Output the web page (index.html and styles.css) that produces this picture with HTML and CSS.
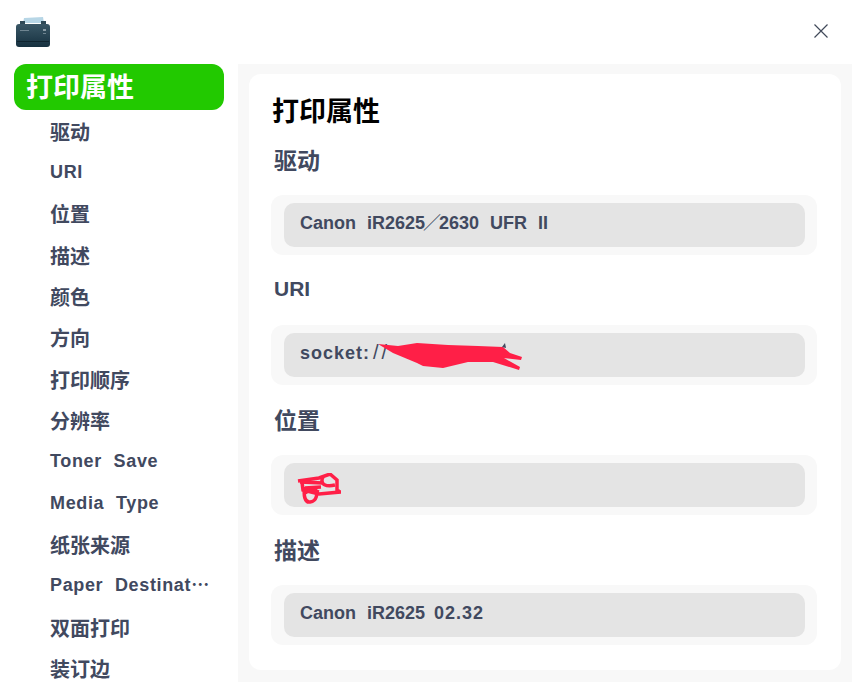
FILE: index.html
```html
<!DOCTYPE html>
<html lang="zh-CN">
<head>
<meta charset="utf-8">
<title>打印属性</title>
<link rel="stylesheet" href="styles.css">
</head>
<body>
<div class="app">
  <header class="titlebar">
    <svg class="logo" viewBox="0 0 36 31" width="36" height="31">
      <defs>
        <linearGradient id="bodyGrad" x1="0" y1="0" x2="0" y2="1">
          <stop offset="0" stop-color="#3a5766"/>
          <stop offset="0.6" stop-color="#24404f"/>
          <stop offset="1" stop-color="#16303f"/>
        </linearGradient>
      </defs>
      <path d="M9 1l19-1 1 6H8z" fill="#b7d6e6"/>
      <path d="M5 4h5v4H5zM26 4h5v4h-5z" fill="#2f4a58"/>
      <rect x="1" y="7" width="34" height="23" rx="3" fill="url(#bodyGrad)"/>
      <rect x="5" y="13" width="9" height="1" fill="#6f8591"/>
      <rect x="28" y="12" width="3" height="2" fill="#8a9ba5"/>
      <rect x="28" y="16" width="3" height="1" fill="#6f8591"/>
      <rect x="2" y="24" width="32" height="1" fill="#10242f"/>
    </svg>
    <svg class="close" viewBox="0 0 16 16" width="16" height="16">
      <path d="M1.5 1.5l13 13M14.5 1.5l-13 13" stroke="#41495a" stroke-width="1.2" fill="none"/>
    </svg>
  </header>
  <div class="body">
    <nav class="side">
      <div class="side-head">打印属性</div>
      <div class="side-item">驱动</div>
      <div class="side-item latin">URI</div>
      <div class="side-item">位置</div>
      <div class="side-item">描述</div>
      <div class="side-item">颜色</div>
      <div class="side-item">方向</div>
      <div class="side-item">打印顺序</div>
      <div class="side-item">分辨率</div>
      <div class="side-item latin">Toner Save</div>
      <div class="side-item latin">Media Type</div>
      <div class="side-item">纸张来源</div>
      <div class="side-item latin">Paper Destinat<span class="dots">…</span></div>
      <div class="side-item">双面打印</div>
      <div class="side-item">装订边</div>
    </nav>
    <main class="main">
      <section class="card">
        <h1 class="title">打印属性</h1>
        <h2 class="label">驱动</h2>
        <div class="field"><div class="value">Canon iR2625<span class="wide-slash">／</span>2630 UFR II</div></div>
        <h2 class="label latin-label">URI</h2>
        <div class="field"><div class="value scrawled"><span class="uri">socket:</span><span class="uri-slash">//</span>
          <svg class="scribble s-uri" viewBox="0 0 146 28" width="146" height="28">
            <path d="M0 1L20 3 39 0 70 2 100 3 125 4 132 10 144 14 143 17 126 15 142 24 141 27 115 19 90 19 65 25 45 23 39 20 15 10Z" fill="#ff1f47"/>
            <path d="M124 4l3-4 1 5z" fill="#41495f"/>
          </svg></div></div>
        <h2 class="label">位置</h2>
        <div class="field"><div class="value scrawled">
          <svg class="scribble s-loc" viewBox="0 0 44 31" width="44" height="31">
            <path d="M1 8L22 5 33 1 40 7 40 17 43 19 22 21 6 17 5 9" fill="none" stroke="#ff1f47" stroke-width="3.5"/>
            <path d="M8 14C6 22 8 30 13 29 20 28 21 21 18 15M3 9L26 10M8 15L24 14M26 4C22 12 30 14 38 12M8 20C12 16 18 18 22 19" fill="none" stroke="#ff1f47" stroke-width="3.5"/>
          </svg></div></div>
        <h2 class="label">描述</h2>
        <div class="field"><div class="value">Canon iR2625 <span class="ver">02.32</span></div></div>
      </section>
    </main>
  </div>
</div>
</body>
</html>
```
FILE: styles.css
```css
* { box-sizing: border-box; }
html, body { margin: 0; height: 100%; }
body {
  width: 852px;
  height: 682px;
  overflow: hidden;
  background: #fff;
  font-family: "Liberation Sans", "Noto Sans CJK SC", sans-serif;
  color: #41495f;
}
.app { display: flex; flex-direction: column; height: 682px; }
.titlebar {
  height: 64px;
  flex: none;
  display: flex;
  align-items: flex-start;
  justify-content: space-between;
  padding: 17px 23px 0 15px;
}
.logo { display: block; }
.close { display: block; margin-top: 6px; }
.body { display: flex; flex: 1; min-height: 0; }
.side {
  width: 238px;
  flex: none;
  padding: 0 14px;
  overflow: hidden;
}
.side-head {
  height: 46px;
  width: 210px;
  background: #22c900;
  border-radius: 12px;
  color: #fff;
  font-size: 27px;
  font-weight: 700;
  line-height: 49px;
  padding-left: 12px;
  margin-bottom: 1.5px;
}
.side-item {
  height: 41.35px;
  line-height: 42px;
  padding-left: 36px;
  font-size: 20px;
  font-weight: 700;
  white-space: nowrap;
}
.side-item.latin {
  font-size: 18px;
  line-height: 38px;
  letter-spacing: 0.65px;
  word-spacing: 6px;
}
.dots {
  font-family: "Noto Sans CJK SC", sans-serif;
  font-weight: 700;
  letter-spacing: 0;
  line-height: 0;
}
.main {
  flex: 1;
  background: #f8f8f8;
  padding: 10px 11px 12px;
}
.card {
  height: 596px;
  background: #fff;
  border-radius: 12px;
  padding: 19px 24px 0 22px;
}
.title {
  margin: 0 0 14px;
  font-size: 27px;
  line-height: 38px;
  font-weight: 700;
  color: #000;
  padding-left: 1px;
}
.label {
  margin: 0;
  height: 32px;
  font-size: 23px;
  line-height: 32px;
  font-weight: 700;
  padding-left: 3px;
}
.latin-label {
  font-size: 21px;
  line-height: 28px;
}
.field {
  height: 60px;
  background: #f8f8f8;
  border-radius: 12px;
  padding: 8px 12px 8px 13px;
  margin: 18px 0 20px;
}
.value {
  height: 44px;
  background: #e4e4e4;
  border-radius: 10px;
  line-height: 41px;
  padding-left: 16px;
  font-size: 18px;
  font-weight: 700;
  word-spacing: 6px;
  white-space: nowrap;
}
.wide-slash {
  font-family: "Noto Sans CJK SC", sans-serif;
  font-weight: 500;
  margin: 0 -2px;
  line-height: 0;
}
.ver {
  margin-left: -2px;
  letter-spacing: 1px;
}
.uri { letter-spacing: 1px; }
.uri-slash {
  font-weight: 400;
  font-size: 20px;
  letter-spacing: 3px;
  margin-left: 3px;
  line-height: 0;
}
.scrawled { position: relative; }
.scribble { position: absolute; }
.s-uri { left: 94px; top: 10px; }
.s-loc { left: 13px; top: 10px; }
```
